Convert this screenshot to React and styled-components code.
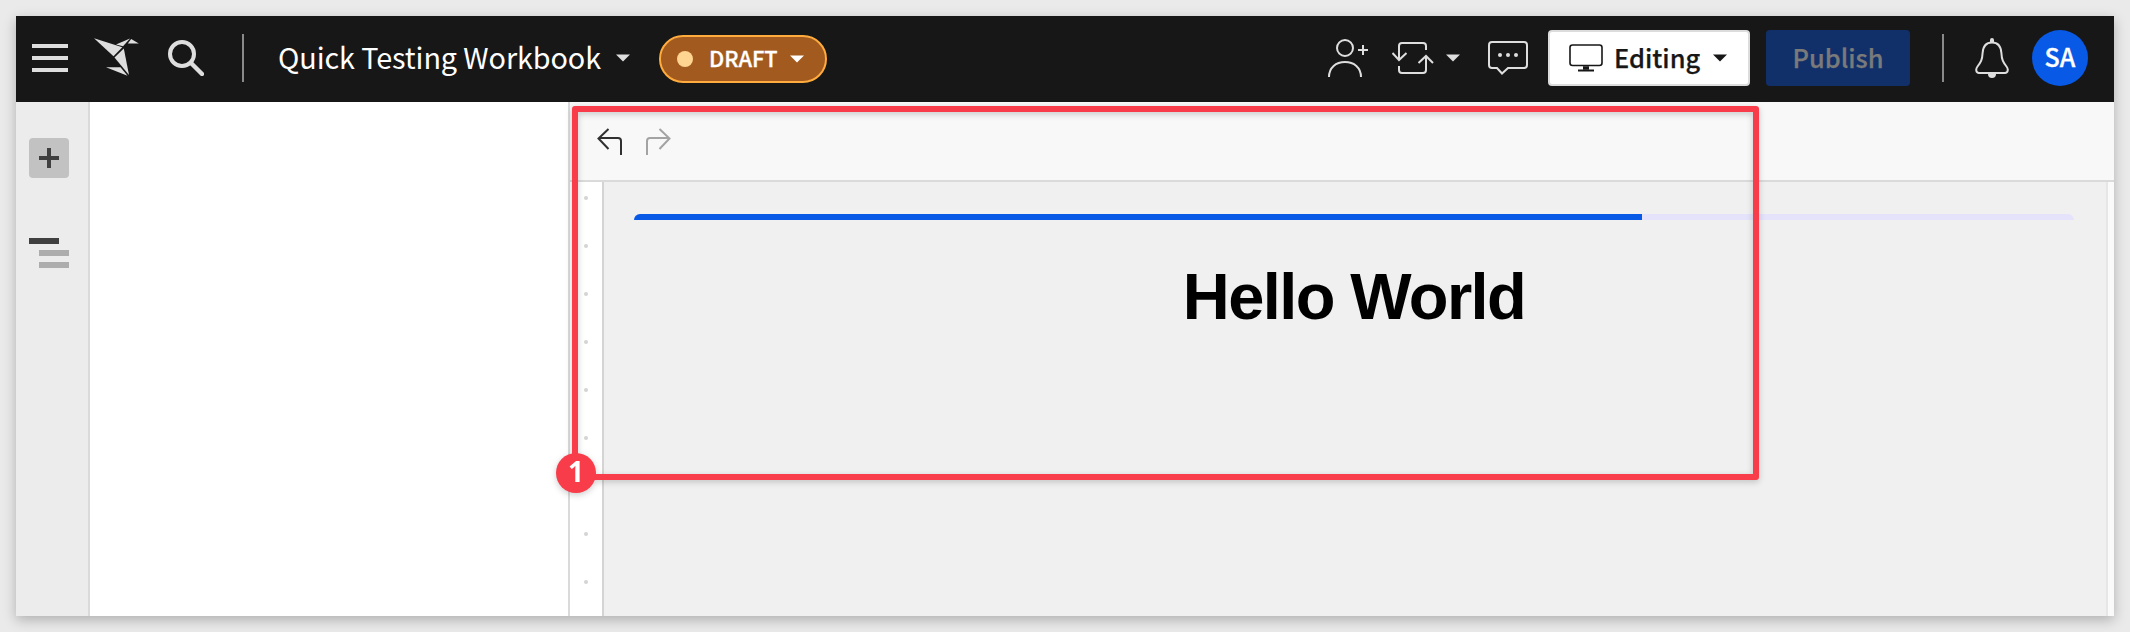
import React from "react";
import styled, { createGlobalStyle } from "styled-components";

const Global = createGlobalStyle`
  * { box-sizing: border-box; }
  body { margin: 0; background: #eaeaea; font-family: "Noto Sans CJK SC", "Noto Sans", sans-serif; }
  svg { display: block; flex: none; }
`;

const Page = styled.div`
  height: 632px;
  padding: 16px;
`;
const Window = styled.div`
  position: relative;
  display: flex;
  flex-direction: column;
  height: 600px;
  background: #fff;
  box-shadow: 0 4px 12px rgba(0, 0, 0, 0.25);
`;
const Header = styled.header`
  display: flex;
  align-items: center;
  flex: none;
  height: 86px;
  padding: 0 26px 2px 16px;
  background: #171717;
  color: #fff;
`;
const Slot = styled.div`
  display: flex;
  flex: none;
  margin-left: ${(p) => p.$gap || 0}px;
`;
const Divider = styled.div`
  width: 2px;
  height: 48px;
  margin-left: ${(p) => p.$gap}px;
  background: #8a8a8a;
`;
const Title = styled.div`
  width: 323px;
  margin-left: 34px;
  padding-bottom: 3px;
  font-size: 28.8px;
  line-height: 48px;
  letter-spacing: -0.1px;
  white-space: nowrap;
`;
const Pill = styled.div`
  display: flex;
  align-items: center;
  width: 168px;
  height: 48px;
  margin: 2px 0 0 29px;
  padding-left: 16px;
  border: 2px solid #ffab3d;
  border-radius: 24px;
  background: #a35a1f;
`;
const PillDot = styled.span`
  width: 16px;
  height: 16px;
  border-radius: 50%;
  background: #ffd591;
`;
const PillLabel = styled.span`
  width: 68px;
  margin-left: 16px;
  padding-bottom: 3px;
  font-size: 21.8px;
  font-weight: 500;
  line-height: 41px;
  white-space: nowrap;
  -webkit-text-stroke: 0.3px currentColor;
`;
const Spacer = styled.div`
  flex: 1;
`;
const Button = styled.button`
  display: flex;
  align-items: center;
  flex: none;
  justify-content: ${(p) => (p.$primary ? "center" : "flex-start")};
  width: ${(p) => (p.$primary ? 144 : 202)}px;
  height: 56px;
  margin-left: ${(p) => (p.$primary ? 16 : 20)}px;
  padding: ${(p) => (p.$primary ? "0 0 2px" : "0 0 0 19px")};
  border: ${(p) => (p.$primary ? "0" : "2px solid #dcdcdc")};
  border-radius: 4px;
  background: ${(p) => (p.$primary ? "#11306a" : "#fff")};
  color: ${(p) => (p.$primary ? "#7a7a7a" : "#171717")};
  font: 500 25.4px/50px "Noto Sans CJK SC", sans-serif;
  -webkit-text-stroke: 0.25px currentColor;
`;
const EditingLabel = styled.span`
  width: 87px;
  margin-left: 11px;
  padding-bottom: 2px;
  text-align: left;
`;
const Avatar = styled.div`
  flex: none;
  width: 56px;
  height: 56px;
  margin-left: 23px;
  border-radius: 50%;
  background: #0859e6;
  font-size: 25px;
  font-weight: 500;
  line-height: 53px;
  text-align: center;
  -webkit-text-stroke: 0.3px currentColor;
`;

const Body = styled.div`
  display: flex;
  flex: 1;
`;
const Rail = styled.nav`
  width: 74px;
  padding: 36px 0 0 13px;
  border-right: 2px solid #dadada;
  background: #ececec;
`;
const AddButton = styled.div`
  display: grid;
  place-items: center;
  width: 40px;
  height: 40px;
  margin-bottom: 60px;
  border-radius: 4px;
  background: #c2c2c2;
`;
const Bar = styled.div`
  width: 30px;
  height: 6px;
  margin: 0 0 6px ${(p) => (p.$child ? 10 : 0)}px;
  background: ${(p) => (p.$child ? "#adadad" : "#404040")};
`;
const SidePanel = styled.aside`
  width: 480px;
  border-right: 2px solid #dadada;
  background: #fff;
`;
const Main = styled.main`
  display: flex;
  flex: 1;
  flex-direction: column;
`;
const Toolbar = styled.div`
  display: flex;
  gap: 24px;
  height: 80px;
  padding: 26px 0 0 27px;
  border-bottom: 2px solid #dadada;
  background: #f8f8f8;
`;
const Workspace = styled.div`
  display: flex;
  flex: 1;
`;
const Gutter = styled.div`
  display: flex;
  flex-direction: column;
  gap: 44px;
  width: 34px;
  padding: 14px 0 0 14px;
  border-right: 2px solid #d4d4d4;
  background: #fff;
`;
const GutterDot = styled.span`
  width: 4px;
  height: 4px;
  border-radius: 50%;
  background: #d4d4d4;
`;
const Canvas = styled.section`
  flex: 1;
  padding: 32px 32px 0 30px;
  border-right: 2px solid #e6e6e6;
  background: #f0f0f0;
`;
const Margin = styled.div`
  width: 6px;
  background: #fafafa;
`;
const Track = styled.div`
  height: 6px;
  overflow: hidden;
  border-radius: 8px 8px 0 0;
  background: #e5e3fb;
`;
const Fill = styled.div`
  width: ${(p) => p.$value}%;
  height: 100%;
  background: #0859e6;
`;
const Heading = styled.h1`
  margin: 38px 0 0;
  color: #000;
  font: bold 65px/77px "Liberation Sans", Arial, sans-serif;
  letter-spacing: -1.6px;
  text-align: center;
`;
const Callout = styled.div`
  position: absolute;
  top: 90px;
  left: 556px;
  width: 1187px;
  height: 374px;
  border: 6px solid #f83c49;
  border-radius: 3px;
  filter: drop-shadow(0 2px 3px rgba(0, 0, 0, 0.2));
`;
const CalloutBadge = styled.div`
  position: absolute;
  top: 341px;
  left: -22px;
  width: 40px;
  height: 40px;
  border-radius: 50%;
  background: #f83c49;
  color: #fff;
  font: bold 28px/37px "Open Sans", sans-serif;
  text-align: center;
`;

const Caret = ({ color = "#dedede" }) => (
  <svg width="14" height="8" viewBox="0 0 14 8"><path d="M0 .5h14L7 7.5z" fill={color} /></svg>
);
const Menu = () => (
  <svg width="36" height="28" viewBox="0 0 36 28" fill="#dedede"><path d="M0 0h36v4H0zM0 12h36v4H0zM0 24h36v4H0z" /></svg>
);
const Bird = () => (
  <svg width="46" height="40" viewBox="0 0 46 40" fill="#dedede">
    <path d="M0 .3 28.300 9.200 19.500 18.300z" />
    <path d="M22 6.400 36 .5 29 8.300z" />
    <path d="M37.200.9 44.800 5.400H33.800z" />
    <path d="M29.800 10.600 35 37 20.500 19.600z" />
    <path d="M12 29.200H26.500L33.500 37.800z" />
  </svg>
);
const Search = () => (
  <svg width="36" height="36" viewBox="0 0 36 36" fill="none" stroke="#dedede" strokeWidth="4">
    <circle cx="14" cy="14" r="12" /><path d="m23 23 11 11" strokeLinecap="round" strokeWidth="4.400" />
  </svg>
);
const AddUser = () => (
  <svg width="40" height="38" viewBox="0 0 40 38" fill="none" stroke="#dedede" strokeWidth="2">
    <circle cx="17" cy="9" r="8" /><path d="M1 38C1 28.500 8 23 17 23s16 5.500 16 15M30 11h10M35 6v10" />
  </svg>
);
const Sync = () => (
  <svg width="42" height="32" viewBox="0 0 42 32" fill="none" stroke="#dedede" strokeWidth="2">
    <path d="M34 8V4a3 3 0 0 0-3-3H10a3 3 0 0 0-3 3v14M.5 11 7 18l7.500-7M7 24v4a3 3 0 0 0 3 3h21a3 3 0 0 0 3-3V14M26.500 21 34 14l7 7" />
  </svg>
);
const Comment = () => (
  <svg width="40" height="34" viewBox="0 0 40 34" fill="none" stroke="#dedede" strokeWidth="2">
    <path d="M4 1h32a3 3 0 0 1 3 3v20a3 3 0 0 1-3 3H20l-6 5.500L9 27H4a3 3 0 0 1-3-3V4a3 3 0 0 1 3-3z" />
    <g fill="#dedede" stroke="none"><circle cx="12" cy="14" r="2" /><circle cx="20" cy="14" r="2" /><circle cx="28" cy="14" r="2" /></g>
  </svg>
);
const Monitor = () => (
  <svg width="34" height="28" viewBox="0 0 34 28" fill="none" stroke="#171717" strokeWidth="1.600">
    <rect x="1" y="1" width="32" height="20.500" rx="2.500" /><path d="M9 26.500h16" strokeWidth="2" /><path d="M14 24h6" strokeWidth="3.500" />
  </svg>
);
const Bell = () => (
  <svg width="34" height="40" viewBox="0 0 34 40" fill="none" stroke="#dedede" strokeWidth="2">
    <path d="M17 4.500C11 4.500 8 9 7.600 15 7.200 22 6 24 2.500 28.500.5 31 .8 35 4 35h26c3.200 0 3.500-4 1.500-6.500C28 24 26.800 22 26.400 15 26 9 23 4.500 17 4.500z" />
    <path d="M15 5V2a2 2 0 0 1 4 0v3zM13 36h8a4 4 0 0 1-8 0z" fill="#dedede" stroke="none" />
  </svg>
);
const Arrow = ({ color, flip }) => (
  <svg width="25" height="28" viewBox="0 0 25 28" fill="none" stroke={color} strokeWidth="2">
    <path transform={flip ? "translate(25 0) scale(-1 1)" : undefined} d="M11.500 1 1.500 10.500 11.500 21M1.500 10H21a3 3 0 0 1 3 3v14" />
  </svg>
);

export default function App() {
  return (
    <Page>
      <Global />
      <Window>
        <Header>
          <Slot><Menu /></Slot>
          <Slot $gap={26}><Bird /></Slot>
          <Slot $gap={28}><Search /></Slot>
          <Divider $gap={38} />
          <Title>Quick Testing Workbook</Title>
          <Slot $gap={15}><Caret /></Slot>
          <Pill>
            <PillDot />
            <PillLabel>DRAFT</PillLabel>
            <Slot $gap={13}><Caret color="#fff" /></Slot>
          </Pill>
          <Spacer />
          <Slot><AddUser /></Slot>
          <Slot $gap={24}><Sync /></Slot>
          <Slot $gap={12}><Caret /></Slot>
          <Slot $gap={28}><Comment /></Slot>
          <Button>
            <Monitor />
            <EditingLabel>Editing</EditingLabel>
            <Slot $gap={12}><Caret color="#171717" /></Slot>
          </Button>
          <Button $primary>Publish</Button>
          <Divider $gap={32} />
          <Slot $gap={31}><Bell /></Slot>
          <Avatar>SA</Avatar>
        </Header>
        <Body>
          <Rail>
            <AddButton>
              <svg width="20" height="20" viewBox="0 0 20 20"><path d="M0 10h20M10 0v20" stroke="#404040" strokeWidth="4" /></svg>
            </AddButton>
            <Bar />
            <Bar $child />
            <Bar $child />
          </Rail>
          <SidePanel />
          <Main>
            <Toolbar>
              <Arrow color="#303030" />
              <Arrow color="#a3a3a3" flip />
            </Toolbar>
            <Workspace>
              <Gutter>
                {Array.from({ length: 9 }, (_, i) => <GutterDot key={i} />)}
              </Gutter>
              <Canvas>
                <Track><Fill $value={70} /></Track>
                <Heading>Hello World</Heading>
              </Canvas>
              <Margin />
            </Workspace>
          </Main>
        </Body>
        <Callout><CalloutBadge>1</CalloutBadge></Callout>
      </Window>
    </Page>
  );
}
